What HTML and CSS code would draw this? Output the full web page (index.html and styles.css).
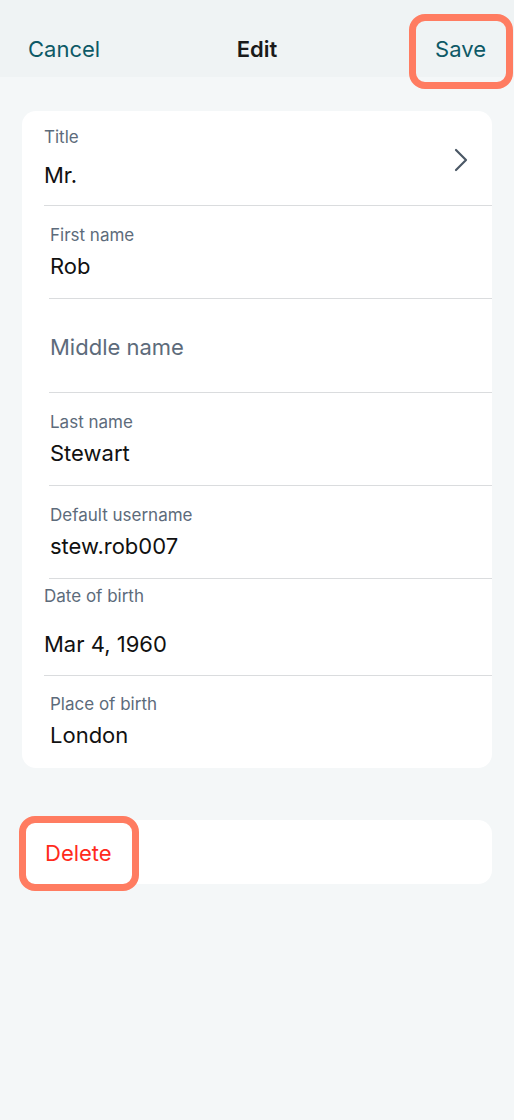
FILE: index.html
```html
<!DOCTYPE html>
<html>
<head>
<meta charset="utf-8">
<link rel="stylesheet" href="styles.css">
</head>
<body>
<header class="nav">
  <span class="nav-btn cancel">Cancel</span>
  <span class="nav-title">Edit</span>
  <span class="nav-btn save">Save<span class="hl hl-save"></span></span>
</header>
<main class="content">
  <section class="card">
    <div class="row row-title">
      <div class="fields">
        <div class="label">Title</div>
        <div class="value">Mr.</div>
      </div>
      <svg class="chevron" width="14" height="24" viewBox="0 0 14 24"><path d="M2 2 L12 12 L2 22" fill="none" stroke="#4b5866" stroke-width="2.2" stroke-linecap="round" stroke-linejoin="round"/></svg>
    </div>
    <div class="row row-std">
      <div class="label">First name</div>
      <div class="value">Rob</div>
    </div>
    <div class="row row-std row-placeholder">
      <div class="placeholder">Middle name</div>
    </div>
    <div class="row row-std">
      <div class="label">Last name</div>
      <div class="value">Stewart</div>
    </div>
    <div class="row row-std">
      <div class="label">Default username</div>
      <div class="value">stew.rob007</div>
    </div>
    <div class="row row-date">
      <div class="label">Date of birth</div>
      <div class="value">Mar 4, 1960</div>
    </div>
    <div class="row row-std row-last">
      <div class="label">Place of birth</div>
      <div class="value">London</div>
    </div>
  </section>
  <section class="card delete-card">
    <span class="delete">Delete<span class="hl hl-delete"></span></span>
  </section>
</main>
</body>
</html>
```
FILE: styles.css
```css
* { box-sizing: border-box; }
html, body { margin: 0; padding: 0; }
body {
  width: 514px;
  height: 1120px;
  background: #f4f7f8;
  font-family: Inter, "Liberation Sans", sans-serif;
  -webkit-font-smoothing: antialiased;
}
.nav {
  height: 77px;
  background: #eff3f4;
  display: flex;
  align-items: center;
  justify-content: space-between;
  padding: 18px 28px 0 28px;
  position: relative;
}
.nav-btn {
  font-size: 22px;
  color: #0d5966;
  position: relative;
  line-height: 28px;
  padding-top: 2px;
}
.nav-title {
  position: absolute;
  left: 0;
  right: 0;
  top: 18px;
  bottom: 0;
  display: flex;
  align-items: center;
  justify-content: center;
  font-size: 22px;
  font-weight: 600;
  color: #1a1a1a;
  line-height: 28px;
  padding-top: 2px;
  pointer-events: none;
}
.hl {
  position: absolute;
  border: 7px solid #ff7c61;
  border-radius: 16px;
}
.hl-save {
  left: -26px;
  right: -27px;
  top: -19px;
  bottom: -26px;
}
.content {
  padding: 34px 22px 0 22px;
}
.card {
  background: #ffffff;
  border-radius: 14px;
  overflow: visible;
}
.row {
  border-bottom: 1px solid #dadcde;
}
.row-last { border-bottom: none; }
.label {
  font-size: 17px;
  line-height: 20px;
  color: #5d6b7b;
}
.value {
  font-size: 22px;
  line-height: 28px;
  color: #111111;
}
.row-title {
  margin-left: 22px;
  height: 95px;
  display: flex;
  align-items: flex-start;
  justify-content: space-between;
  padding: 16px 24px 0 0;
}
.row-title .value { margin-top: 14px; }
.chevron { margin-top: 21px; }
.row-std {
  margin-left: 27px;
  height: 93px;
  padding: 19px 0 0 1px;
}
.row-std .value { margin-top: 7px; }
.row-placeholder {
  display: flex;
  align-items: center;
  padding-top: 2px;
  height: 94px;
}
.placeholder {
  font-size: 22px;
  line-height: 28px;
  color: #5d6b7b;
}
.row-date {
  margin-left: 22px;
  height: 97px;
  padding-top: 7px;
}
.row-date .value { margin-top: 24px; }
.row-last { height: 92px; padding-top: 18px; }
.delete-card {
  margin-top: 52px;
  height: 64px;
  display: flex;
  align-items: center;
  padding-left: 23px;
}
.delete {
  position: relative;
  font-size: 22px;
  line-height: 28px;
  color: #ff2a1c;
  padding-top: 2px;
}
.hl-delete {
  left: -26px;
  right: -27px;
  top: -21px;
  bottom: -24px;
}
```
